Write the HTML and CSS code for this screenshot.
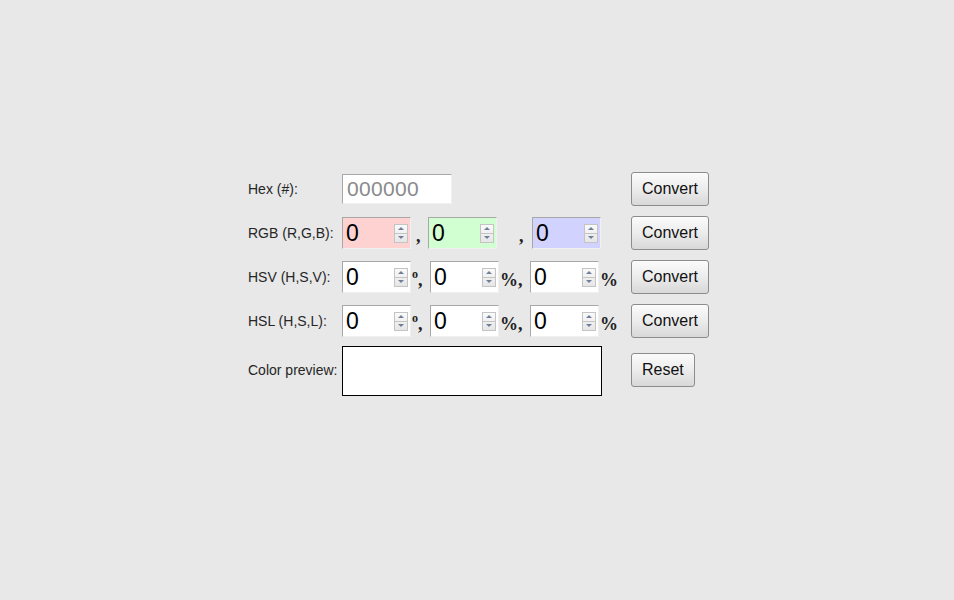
FILE: index.html
```html
<!DOCTYPE html>
<html lang="en">
<head>
    <meta charset="UTF-8">
    <meta name="viewport" content="width=device-width, initial-scale=1.0">
    <title>Color Converter</title>
    <link rel="stylesheet" href="styles.css">
</head>
<body>
    <div class="converter">
        <label class="rowLabel">Hex (#):</label>
        <div class="fields">
            <div class="field hex"><span class="placeholder">000000</span></div>
        </div>
        <div class="actions"><button>Convert</button></div>

        <label class="rowLabel">RGB (R,G,B):</label>
        <div class="fields">
            <div class="field num red"><span class="value">0</span><span class="spin"><i class="up"></i><i class="down"></i></span></div>
            <span class="sep rgbSep1">,</span>
            <div class="field num green"><span class="value">0</span><span class="spin"><i class="up"></i><i class="down"></i></span></div>
            <span class="sep rgbSep2">,</span>
            <div class="field num blue"><span class="value">0</span><span class="spin"><i class="up"></i><i class="down"></i></span></div>
        </div>
        <div class="actions"><button>Convert</button></div>

        <label class="rowLabel">HSV (H,S,V):</label>
        <div class="fields">
            <div class="field num"><span class="value">0</span><span class="spin"><i class="up"></i><i class="down"></i></span></div>
            <span class="sep degSep"><sup>o</sup>,</span>
            <div class="field num"><span class="value">0</span><span class="spin"><i class="up"></i><i class="down"></i></span></div>
            <span class="sep pctSep">%,</span>
            <div class="field num"><span class="value">0</span><span class="spin"><i class="up"></i><i class="down"></i></span></div>
            <span class="sep lastSep">%</span>
        </div>
        <div class="actions"><button>Convert</button></div>

        <label class="rowLabel">HSL (H,S,L):</label>
        <div class="fields">
            <div class="field num"><span class="value">0</span><span class="spin"><i class="up"></i><i class="down"></i></span></div>
            <span class="sep degSep"><sup>o</sup>,</span>
            <div class="field num"><span class="value">0</span><span class="spin"><i class="up"></i><i class="down"></i></span></div>
            <span class="sep pctSep">%,</span>
            <div class="field num"><span class="value">0</span><span class="spin"><i class="up"></i><i class="down"></i></span></div>
            <span class="sep lastSep">%</span>
        </div>
        <div class="actions"><button>Convert</button></div>

        <label class="rowLabel previewLabel">Color preview:</label>
        <div class="fields previewRow">
            <div class="preview"></div>
        </div>
        <div class="actions previewActions"><button>Reset</button></div>
    </div>
</body>
</html>
```

FILE: styles.css
```css
body {
    margin: 0;
    background-color: #e8e8e8;
    font-family: "Liberation Sans", Arial, sans-serif;
}

.converter {
    display: grid;
    grid-template-columns: 94px 289px 77px;
    row-gap: 10px;
    width: 460px;
    margin: 172px 0 0 248px;
    align-items: center;
}

.rowLabel {
    font-size: 14px;
    color: #262626;
}

.fields {
    display: flex;
    align-items: center;
    height: 34px;
}

.field {
    box-sizing: border-box;
    display: flex;
    align-items: center;
    background-color: #fff;
    border: 1px solid;
    border-color: #a8a8a8 #f0f0f0 #f0f0f0 #a8a8a8;
}

.hex {
    width: 110px;
    height: 30px;
    padding-left: 4px;
}

.placeholder {
    font-size: 21px;
    color: #8a8a8a;
    letter-spacing: 0.3px;
}

.num {
    width: 69px;
    height: 32px;
    padding-left: 3px;
    justify-content: space-between;
}

.value {
    font-size: 23px;
    color: #000;
    line-height: 1;
}

.red {
    background-color: #ffd2d2;
}

.green {
    background-color: #d2ffd2;
}

.blue {
    background-color: #d2d2ff;
}

.spin {
    box-sizing: border-box;
    width: 14px;
    height: 19px;
    margin-right: 2px;
    display: flex;
    flex-direction: column;
    border: 1px solid #c4c4c4;
    background: linear-gradient(#fafafa, #e6e6e6);
}

.spin i {
    flex: 1;
    position: relative;
}

.spin .up {
    border-bottom: 1px solid #c4c4c4;
}

.spin .up::after,
.spin .down::after {
    content: "";
    position: absolute;
    left: 3px;
    border-left: 3px solid transparent;
    border-right: 3px solid transparent;
}

.spin .up::after {
    top: 2px;
    border-bottom: 3px solid #6f7f99;
}

.spin .down::after {
    top: 2px;
    border-top: 3px solid #6f7f99;
}

.sep {
    box-sizing: border-box;
    align-self: flex-end;
    padding-bottom: 5px;
    font-family: "Liberation Serif", "Times New Roman", serif;
    font-weight: bold;
    font-size: 18px;
    color: #222;
    line-height: 1;
}

.rgbSep1 {
    width: 17px;
    padding-left: 5px;
}

.rgbSep2 {
    width: 35px;
    padding-left: 22px;
}

.degSep {
    width: 19px;
    padding-left: 1px;
}

.degSep sup {
    font-size: 12px;
    vertical-align: 8px;
}

.pctSep {
    width: 31px;
    padding-left: 1px;
}

.lastSep {
    width: 20px;
    padding-left: 1px;
}

.previewRow {
    height: 50px;
    margin-top: -2px;
}

.previewLabel {
    margin-top: -4px;
}

.preview {
    box-sizing: border-box;
    width: 260px;
    height: 50px;
    background-color: #fff;
    border: 1px solid #000;
}

.actions {
    display: flex;
}

.previewActions {
    margin-top: -5px;
}

button {
    box-sizing: border-box;
    height: 34px;
    padding: 0 10px;
    font-family: "Liberation Sans", Arial, sans-serif;
    font-size: 16px;
    color: #111;
    border: 1px solid #8c8c8c;
    border-radius: 3px;
    background: linear-gradient(#fbfbfb, #ececec 50%, #d8d8d8);
    cursor: pointer;
}
```
